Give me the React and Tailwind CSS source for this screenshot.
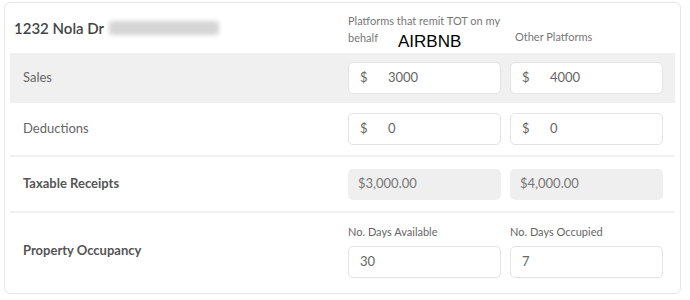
import React from "react";

function MoneyInput({ value }) {
  return (
    <div className="h-[32px] bg-white border border-[#e3e3e3] rounded-[5px] flex items-center pl-[11px] text-[13px] text-[#666]">
      <span className="w-[28px]">$</span>
      <span>{value}</span>
    </div>
  );
}

function PlainInput({ value }) {
  return (
    <div className="h-[32px] bg-white border border-[#e3e3e3] rounded-[5px] flex items-center pl-[11px] text-[13px] text-[#666]">
      {value}
    </div>
  );
}

function Disabled({ value }) {
  return (
    <div className="h-[31px] bg-[#efefef] rounded-[5px] flex items-center pl-[10px] text-[13px] text-[#777]">
      {value}
    </div>
  );
}

export default function App() {
  return (
    <div className="w-[690px] h-[300px] bg-white pt-[2px] pl-[4px] font-['Lato',sans-serif]">
      <div className="w-[677px] h-[292px] border border-[#e6e6e6] rounded-[6px] px-[5px]">
        {/* header */}
        <div className="grid grid-cols-[329px_153px_153px] gap-x-[9px] h-[50px]">
          <div className="flex items-center pl-[4px] text-[15px] font-semibold text-[#444]">
            <span>1232 Nola Dr</span>
            <span className="ml-[5px] w-[110px] h-[14px] rounded-[3px] bg-[#d6d6d6] blur-[2px]"></span>
          </div>
          <div className="relative text-[11px] text-[#777] leading-[17px] pt-[9px]">
            <div>Platforms that remit TOT on my</div>
            <div>behalf</div>
            <span className="absolute left-[50px] top-[29px] text-[17px] text-black font-['Liberation_Sans',sans-serif] leading-[20px]">
              AIRBNB
            </span>
          </div>
          <div className="text-[11px] text-[#777] pt-[26px] pl-[5px]">Other Platforms</div>
        </div>
        {/* sales */}
        <div className="grid grid-cols-[329px_153px_153px] gap-x-[9px] h-[50px] items-center bg-[#f0f0f0]">
          <div className="pl-[13px] text-[13px] text-[#666]">Sales</div>
          <MoneyInput value="3000" />
          <MoneyInput value="4000" />
        </div>
        {/* deductions */}
        <div className="grid grid-cols-[329px_153px_153px] gap-x-[9px] h-[54px] items-center border-b-2 border-[#f2f2f2]">
          <div className="pl-[13px] text-[13px] text-[#666]">Deductions</div>
          <MoneyInput value="0" />
          <MoneyInput value="0" />
        </div>
        {/* taxable */}
        <div className="grid grid-cols-[329px_153px_153px] gap-x-[9px] h-[56px] items-center border-b-2 border-[#f2f2f2]">
          <div className="pl-[13px] text-[13px] font-bold text-[#555]">Taxable Receipts</div>
          <Disabled value="$3,000.00" />
          <Disabled value="$4,000.00" />
        </div>
        {/* occupancy */}
        <div className="grid grid-cols-[329px_153px_153px] gap-x-[9px] h-[76px] items-center">
          <div className="pl-[13px] text-[13px] font-bold text-[#555]">Property Occupancy</div>
          <div className="flex flex-col">
            <div className="text-[11px] text-[#666] mb-[5px]">No. Days Available</div>
            <PlainInput value="30" />
          </div>
          <div className="flex flex-col">
            <div className="text-[11px] text-[#666] mb-[5px]">No. Days Occupied</div>
            <PlainInput value="7" />
          </div>
        </div>
      </div>
    </div>
  );
}
